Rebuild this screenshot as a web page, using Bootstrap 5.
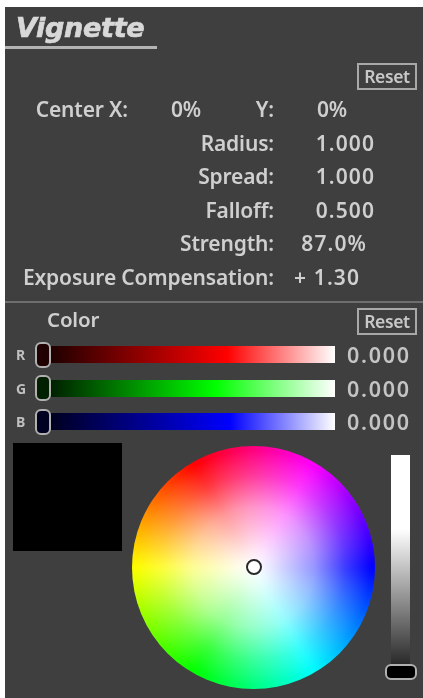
<!DOCTYPE html>
<html lang="en">
<head>
<meta charset="utf-8">
<title>Vignette</title>
<link rel="stylesheet" href="https://cdn.jsdelivr.net/npm/bootstrap@5.3.0/dist/css/bootstrap.min.css">
<style>
html,body{background:#fff;margin:0;height:100%;overflow:hidden}
.vg-panel{margin:7px 0 0 5px;height:691px;background:#3f3f3f;color:#cfcfcf;font-family:"Noto Sans",sans-serif;font-weight:600;font-size:21px;filter:blur(.5px);overflow:hidden}
.vg-title{width:152px;height:42px;border-bottom:3px solid #b4b4b4;padding:3px 0 0 11px;font-family:"DejaVu Sans",sans-serif;font-weight:700;font-style:italic;font-size:27px;line-height:36px;color:#d8d8d8;letter-spacing:-.3px;-webkit-text-stroke:.7px #d8d8d8}
.vg-reset{width:60px;height:27px;border:2px solid #a8a8a8;font-size:17.5px;line-height:22px;text-align:center;color:#c8c8c8;font-weight:600;letter-spacing:-.4px}
.vg-r1{margin:14px 6px 0 0}
.vg-row{display:grid;grid-template-columns:269px 101px;height:33.5px;line-height:33.5px;letter-spacing:-.15px}
.vg-row>span:first-child{text-align:right}
.vg-val{text-align:right;letter-spacing:1.1px}
.vg-rowc{display:grid;grid-template-columns:123px 73px 73px 73px;height:33.5px;line-height:33.5px;margin-top:3px;letter-spacing:-.15px}
.vg-rowc>span{text-align:right}
.vg-p1{padding-right:8px}.vg-p2{padding-right:15px}
.vg-hr{height:2px;background:#6e6e6e;margin:7px 0 0}
.vg-chead{height:35px;padding:5px 6px 0 42px;line-height:27px}
.vg-chead>span:first-child{margin-top:-2px;font-size:20.5px;letter-spacing:-.2px}
.vg-srow{display:flex;align-items:center;height:33.5px}
.vg-lab{width:30px;padding-left:11px;font-size:14px;font-weight:700;color:#c0c0c0}
.vg-track{position:relative;width:300px;height:17px;margin-right:12px}
.vg-track i{position:absolute;inset:0 0 0 16px;display:block}
.vg-tr{background:linear-gradient(90deg,#200000,#ff0000 62%,#fff)}
.vg-tg{background:linear-gradient(90deg,#002000,#00ff00 58%,#fff)}
.vg-tb{background:linear-gradient(90deg,#000020,#0000ff 63%,#fff)}
.vg-thumb{position:absolute;left:0;top:-4.5px;width:16px;height:26px;border:2px solid #b0b0b0;border-radius:6px;z-index:1}
.vg-t1{background:#200000}.vg-t2{background:#002000}.vg-t3{background:#000020}
.vg-sval{letter-spacing:1.7px;color:#c4c4c4;line-height:1;font-size:21.5px}
.vg-bottom{display:flex;margin-top:4px;padding-left:8px}
.vg-swatch{width:109px;height:108px;background:#000;flex:none}
.vg-wheel{position:relative;width:243px;height:243px;margin:3px 0 0 10px;border-radius:50%;flex:none;overflow:hidden}
.vg-wheel::before{content:"";position:absolute;inset:-12px;filter:blur(5px);background:conic-gradient(from 30deg,#f0f,#00f 60deg,#0ff 120deg,#0f0 180deg,#ff0 240deg,#f00 300deg,#f0f 360deg)}
.vg-wheel::after{content:"";position:absolute;inset:0;background:radial-gradient(circle closest-side,#fff 0,rgba(255,255,255,.9) 14%,rgba(255,255,255,.58) 50%,rgba(255,255,255,.22) 76%,rgba(255,255,255,0) 97%)}
.vg-dot{position:absolute;z-index:1;left:113.5px;top:113px;width:16px;height:16px;border-radius:50%;border:2px solid #2a2a2a;background:#fff}
.vg-vbar{position:relative;width:19px;height:225px;margin:12px 0 0 16px;background:linear-gradient(#fff 0,#fff 33%,#111 100%);flex:none}
.vg-vthumb{position:absolute;left:-6px;top:209px;width:32px;height:16px;border:2px solid #b0b0b0;border-radius:6px;background:#000}
</style>
</head>
<body>
<div class="vg-panel">
  <div class="vg-title">Vignette</div>
  <div class="d-flex justify-content-end vg-r1"><div class="vg-reset">Reset</div></div>
  <div class="vg-rowc"><span>Center X:</span><span>0%</span><span>Y:</span><span>0%</span></div>
  <div class="vg-row"><span>Radius:</span><span class="vg-val">1.000</span></div>
  <div class="vg-row"><span>Spread:</span><span class="vg-val">1.000</span></div>
  <div class="vg-row"><span>Falloff:</span><span class="vg-val">0.500</span></div>
  <div class="vg-row"><span>Strength:</span><span class="vg-val vg-p1">87.0%</span></div>
  <div class="vg-row"><span>Exposure Compensation:</span><span class="vg-val vg-p2">+ 1.30</span></div>
  <div class="vg-hr"></div>
  <div class="d-flex justify-content-between vg-chead"><span>Color</span><div class="vg-reset">Reset</div></div>
  <div class="vg-srow"><span class="vg-lab">R</span><div class="vg-track"><b class="vg-thumb vg-t1"></b><i class="vg-tr"></i></div><span class="vg-sval">0.000</span></div>
  <div class="vg-srow"><span class="vg-lab">G</span><div class="vg-track"><b class="vg-thumb vg-t2"></b><i class="vg-tg"></i></div><span class="vg-sval">0.000</span></div>
  <div class="vg-srow"><span class="vg-lab">B</span><div class="vg-track"><b class="vg-thumb vg-t3"></b><i class="vg-tb"></i></div><span class="vg-sval">0.000</span></div>
  <div class="vg-bottom">
    <div class="vg-swatch"></div>
    <div class="vg-wheel"><div class="vg-dot"></div></div>
    <div class="vg-vbar"><div class="vg-vthumb"></div></div>
  </div>
</div>
<script src="https://cdn.jsdelivr.net/npm/bootstrap@5.3.0/dist/js/bootstrap.bundle.min.js"></script>
</body>
</html>
